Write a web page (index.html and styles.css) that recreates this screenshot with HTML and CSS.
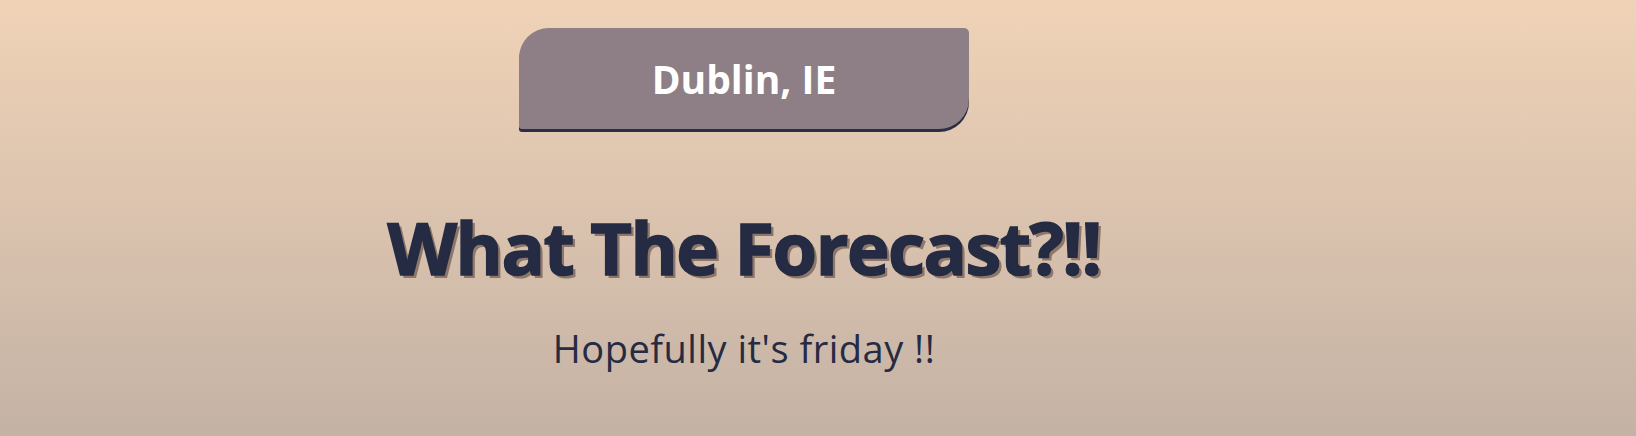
FILE: index.html
```html
<!DOCTYPE html>
<html lang="en">
<head>
<meta charset="utf-8">
<title>What The Forecast?!!</title>
<link rel="stylesheet" href="styles.css">
</head>
<body>
<main class="page">
  <section class="hero">
    <div class="location">Dublin, IE</div>
    <h1 class="title">What The Forecast?!!</h1>
    <p class="subtitle">Hopefully it's friday !!</p>
  </section>
</main>
</body>
</html>
```
FILE: styles.css
```css
html, body {
  margin: 0;
  padding: 0;
  height: 100%;
}
body {
  background: linear-gradient(to bottom, #f0d3b7 0%, #c4b2a5 100%);
  font-family: "Open Sans", "Noto Sans", sans-serif;
  color: #252b42;
  overflow: hidden;
}
.page {
  width: 1488px;
  display: flex;
  justify-content: center;
}
.hero {
  display: flex;
  flex-direction: column;
  align-items: center;
  padding-top: 28px;
}
.location {
  width: 450px;
  height: 101px;
  box-sizing: border-box;
  display: flex;
  align-items: center;
  justify-content: center;
  background: #8d7f85;
  color: #fff;
  font-weight: 700;
  font-size: 39px;
  border-radius: 30px 5px 30px 3px;
  box-shadow: 0 3px 0 #2b2e45;
}
.title {
  margin: 82px 0 0;
  font-size: 72px;
  font-weight: 700;
  line-height: 1;
  letter-spacing: -1.5px;
  -webkit-text-stroke: 1.5px #252b42;
  text-shadow: 3px 3px 0 #8d776a;
}
.subtitle {
  margin: 46px 0 0;
  font-size: 38px;
  font-weight: 500;
  line-height: 1;
  letter-spacing: 0.5px;
}
```
